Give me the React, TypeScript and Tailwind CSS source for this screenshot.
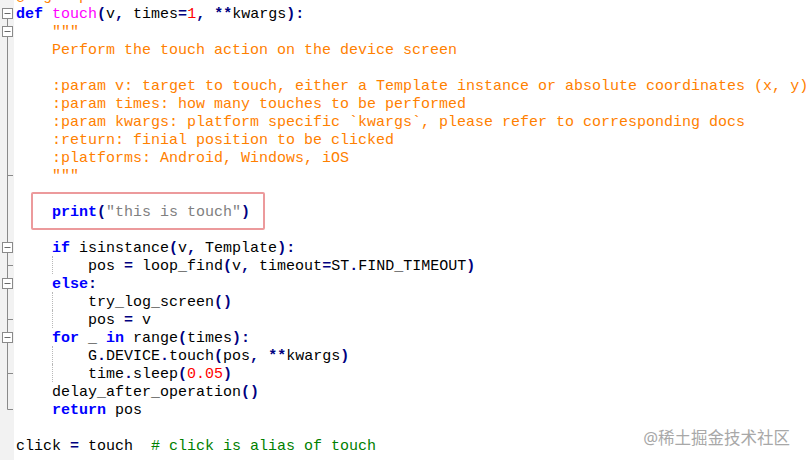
import React from 'react';

type Fold = 'none' | 'head' | 'box' | 'line' | 'tick' | 'end';
type Tok = [string, string];

const kw = 'text-[#0000ff] font-bold';
const fn = 'text-[#ff00ff]';
const op = 'text-[#000080] font-bold';
const num = 'text-[#ff0000]';
const doc = 'text-[#ff8000]';
const str = 'text-[#808080]';
const cmt = 'text-[#008000]';
const pl = 'text-black';

const lines: { fold: Fold; guide?: boolean; toks: Tok[] }[] = [
  { fold: 'head', toks: [['def', kw], [' ', pl], ['touch', fn], ['(', op], ['v', pl], [',', op], [' times', pl], ['=', op], ['1', num], [',', op], [' ', pl], ['**', op], ['kwargs', pl], ['):', op]] },
  { fold: 'box', toks: [['    """', doc]] },
  { fold: 'line', toks: [['    Perform the touch action on the device screen', doc]] },
  { fold: 'line', toks: [['', pl]] },
  { fold: 'line', toks: [['    :param v: target to touch, either a Template instance or absolute coordinates (x, y)', doc]] },
  { fold: 'line', toks: [['    :param times: how many touches to be performed', doc]] },
  { fold: 'line', toks: [['    :param kwargs: platform specific `kwargs`, please refer to corresponding docs', doc]] },
  { fold: 'line', toks: [['    :return: finial position to be clicked', doc]] },
  { fold: 'line', toks: [['    :platforms: Android, Windows, iOS', doc]] },
  { fold: 'tick', toks: [['    """', doc]] },
  { fold: 'line', toks: [['', pl]] },
  { fold: 'line', toks: [['    ', pl], ['print', kw], ['(', op], ['"this is touch"', str], [')', op]] },
  { fold: 'line', toks: [['', pl]] },
  { fold: 'box', toks: [['    ', pl], ['if', kw], [' isinstance', pl], ['(', op], ['v', pl], [',', op], [' Template', pl], ['):', op]] },
  { fold: 'tick', guide: true, toks: [['        pos ', pl], ['=', op], [' loop_find', pl], ['(', op], ['v', pl], [',', op], [' timeout', pl], ['=', op], ['ST', pl], ['.', op], ['FIND_TIMEOUT', pl], [')', op]] },
  { fold: 'box', toks: [['    ', pl], ['else', kw], [':', op]] },
  { fold: 'line', guide: true, toks: [['        try_log_screen', pl], ['()', op]] },
  { fold: 'tick', guide: true, toks: [['        pos ', pl], ['=', op], [' v', pl]] },
  { fold: 'box', toks: [['    ', pl], ['for', kw], [' _ ', pl], ['in', kw], [' range', pl], ['(', op], ['times', pl], ['):', op]] },
  { fold: 'line', guide: true, toks: [['        G', pl], ['.', op], ['DEVICE', pl], ['.', op], ['touch', pl], ['(', op], ['pos', pl], [',', op], [' ', pl], ['**', op], ['kwargs', pl], [')', op]] },
  { fold: 'tick', guide: true, toks: [['        time', pl], ['.', op], ['sleep', pl], ['(', op], ['0.05', num], [')', op]] },
  { fold: 'line', toks: [['    delay_after_operation', pl], ['()', op]] },
  { fold: 'end', toks: [['    ', pl], ['return', kw], [' pos', pl]] },
  { fold: 'none', toks: [['', pl]] },
  { fold: 'none', toks: [['click ', pl], ['=', op], [' touch  ', pl], ['# click is alias of touch', cmt]] },
  { fold: 'none', toks: [['', pl]] },
];

const FoldMark = ({ kind }: { kind: Fold }) => (
  <svg width="14" height="18" viewBox="0 0 14 18" className="block">
    {(kind === 'line' || kind === 'tick' || kind === 'box') && (
      <line x1="7.5" y1="0" x2="7.5" y2="18" stroke="#8a8a8a" />
    )}
    {kind === 'head' && <line x1="7.5" y1="14" x2="7.5" y2="18" stroke="#8a8a8a" />}
    {kind === 'end' && <path d="M7.5 0 V9.5 H13" fill="none" stroke="#8a8a8a" />}
    {kind === 'tick' && <line x1="7.5" y1="9.5" x2="13" y2="9.5" stroke="#8a8a8a" />}
    {(kind === 'head' || kind === 'box') && (
      <>
        <rect x="2.5" y="4.5" width="10" height="10" fill="#ffffff" stroke="#8a8a8a" />
        <line x1="4.5" y1="9.5" x2="10.5" y2="9.5" stroke="#6a6a6a" />
      </>
    )}
  </svg>
);

export default function App() {
  return (
    <div className="relative w-[806px] h-[460px] overflow-hidden bg-white font-['Liberation_Mono','Courier_New',monospace] text-[15px]">
      {/* decorator line, mostly scrolled out of view */}
      <div className="flex h-[4px] overflow-hidden">
        <div className="w-[14px] shrink-0 bg-[#f2f2f2]" />
        <div className="pl-[2px] flex flex-col justify-end">
          <div className="h-[18px] pt-[2px] leading-[18px] whitespace-pre text-[#ff8000]">@logwrap</div>
          <div className="h-[2px]" />
        </div>
      </div>
      {lines.map((ln, i) => (
        <div key={i} className="flex h-[18px]">
          <div className="w-[14px] shrink-0 bg-[#f2f2f2]">
            <FoldMark kind={ln.fold} />
          </div>
          <div className="relative h-[18px] pl-[2px] pt-[2px] leading-[18px] whitespace-pre">
            {ln.guide && (
              <span className="absolute left-[38px] top-0 h-[18px] border-l border-dotted border-[#b8b8b8]" />
            )}
            {ln.toks.map(([t, c], j) => (
              <span key={j} className={c}>
                {t}
              </span>
            ))}
          </div>
        </div>
      ))}

      {/* highlight box */}
      <div className="absolute left-[31px] top-[192px] w-[234px] h-[38px] border-2 border-[#ec9a9c] rounded-[2px]" />

      {/* watermark */}
      <div className="absolute right-[16px] bottom-[12px] text-[16.5px] leading-[20px] text-[#a8a8a8] font-['Noto_Sans','Noto_Sans_CJK_SC',sans-serif]">
        @稀土掘金技术社区
      </div>
    </div>
  );
}
